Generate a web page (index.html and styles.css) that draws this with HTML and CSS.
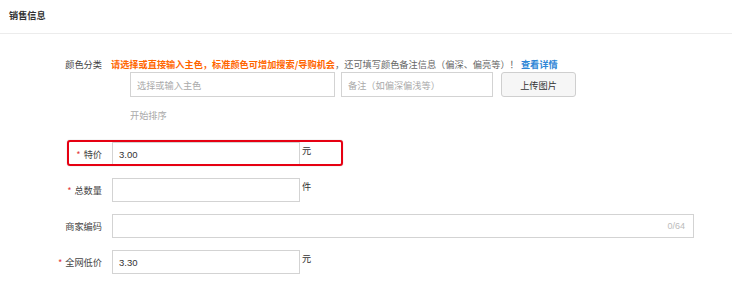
FILE: index.html
```html
<!DOCTYPE html>
<html lang="zh-CN">
<head>
<meta charset="utf-8">
<title>销售信息</title>
<link rel="stylesheet" href="styles.css">
</head>
<body>
<div class="header"><span class="title">销售信息</span></div>
<div class="form">
  <div class="row color-row">
    <div class="label">颜色分类</div>
    <div class="content">
      <div class="tip"><span class="warn">请选择或直接输入主色，标准颜色可增加搜索/导购机会</span>，还可填写颜色备注信息（偏深、偏亮等）！ <a class="link">查看详情</a></div>
      <div class="color-inputs">
        <div class="input w-main"><span class="ph">选择或输入主色</span></div>
        <div class="input w-note"><span class="ph">备注（如偏深偏浅等）</span></div>
        <div class="btn">上传图片</div>
      </div>
      <div class="sort">开始排序</div>
    </div>
  </div>

  <div class="field first">
    <div class="label"><span class="star">*</span>特价</div>
    <div class="line">
      <div class="input w-num"><span class="val">3.00</span></div>
      <span class="unit">元</span>
    </div>
    <div class="highlight"></div>
  </div>

  <div class="field">
    <div class="label"><span class="star">*</span>总数量</div>
    <div class="line">
      <div class="input w-num"></div>
      <span class="unit">件</span>
    </div>
  </div>

  <div class="field">
    <div class="label">商家编码</div>
    <div class="line">
      <div class="input w-code"><span class="count">0/64</span></div>
    </div>
  </div>

  <div class="field">
    <div class="label"><span class="star">*</span>全网低价</div>
    <div class="line">
      <div class="input w-num"><span class="val">3.30</span></div>
      <span class="unit">元</span>
    </div>
  </div>
</div>
</body>
</html>
```

FILE: styles.css
```css
* { box-sizing: border-box; }
body {
  margin: 0;
  background: #fff;
  font-family: "Noto Sans CJK SC", "Liberation Sans", sans-serif;
  font-size: 9.2px;
  color: #333;
  width: 732px;
  height: 294px;
  overflow: hidden;
}
.header {
  height: 34px;
  padding: 9px 0 0 9px;
  border-bottom: 1px solid #ececec;
}
.title {
  display: block;
  line-height: 12px;
  font-weight: bold;
  color: #333;
}
.form {
  padding-top: 23px;
}
.row, .field {
  display: grid;
  grid-template-columns: 102px auto;
  column-gap: 9px;
}
.label {
  text-align: right;
  line-height: 14px;
  color: #444;
  white-space: nowrap;
}
.tip {
  line-height: 14px;
  color: #666;
  white-space: nowrap;
}
.warn {
  color: #ff6600;
  font-weight: bold;
}
.link {
  color: #2e86d6;
  font-weight: bold;
}
.color-inputs {
  display: flex;
  margin-top: 1px;
  margin-left: 19px;
  height: 25px;
}
.input {
  border: 1px solid #d3d3d3;
  background: #fff;
  height: 100%;
  display: flex;
  align-items: center;
  padding: 0 6px;
  font-family: "Liberation Sans", "Noto Sans CJK SC", sans-serif;
  color: #333;
}
.ph {
  color: #aaa;
  font-family: "Noto Sans CJK SC", sans-serif;
}
.w-main { width: 205px; }
.w-note { width: 152px; margin-left: 6px; }
.btn {
  width: 75px;
  margin-left: 8px;
  border: 1px solid #cfcfcf;
  border-radius: 3px;
  background: #f6f6f6;
  display: flex;
  align-items: center;
  justify-content: center;
  color: #333;
}
.sort {
  margin-top: 11px;
  margin-left: 19px;
  line-height: 14px;
  color: #aaa;
}
.field {
  position: relative;
  column-gap: 10px;
  margin-top: 12px;
  height: 24px;
  align-items: center;
}
.field.first { margin-top: 20px; }
.line {
  display: flex;
  height: 24px;
  align-items: flex-start;
}
.w-num { width: 188px; }
.w-code { width: 582px; justify-content: flex-end; padding-right: 8px; }
.val { font-size: 9.5px; }
.count {
  color: #bbb;
  font-size: 9px;
}
.unit {
  margin-left: 2px;
  line-height: 16px;
  color: #333;
}
.star {
  color: #e4393c;
  margin-right: 3px;
}
.highlight {
  position: absolute;
  left: 67px;
  top: -2px;
  width: 276px;
  height: 26px;
  border: 2px solid #e60012;
  border-radius: 3px;
  box-shadow: 0 0 1px rgba(0,0,0,0.4);
  pointer-events: none;
}
```
